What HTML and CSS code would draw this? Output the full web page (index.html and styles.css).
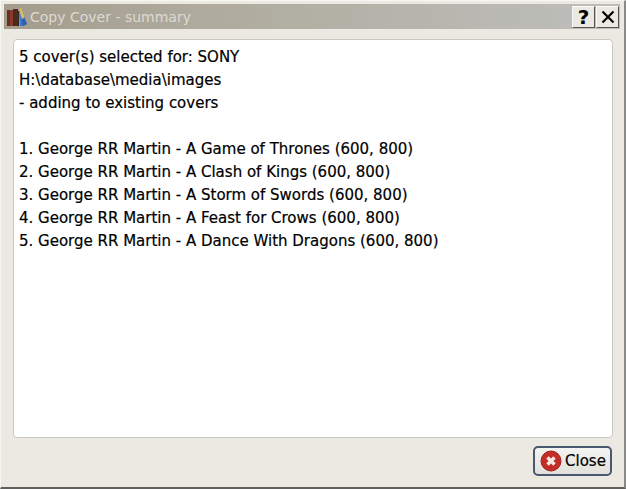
FILE: index.html
```html
<!DOCTYPE html>
<html lang="en">
<head>
    <meta charset="UTF-8">
    <title>Copy Cover - summary</title>
    <link rel="stylesheet" href="styles.css">
</head>
<body>
<div class="window">
    <div class="titlebar">
        <svg class="app-icon" width="21" height="21" viewBox="0 0 21 21">
            <rect x="0" y="4" width="3" height="16" fill="#6a2f24"/>
            <rect x="3" y="4" width="3" height="16" fill="#8a3b2c"/>
            <rect x="6" y="3" width="1" height="17" fill="#3d2a22"/>
            <rect x="7" y="3" width="4" height="17" fill="#4c2a20"/>
            <rect x="11" y="5" width="1" height="15" fill="#2c2a28"/>
            <path d="M12 3 L14 1 L20 18 L16 20 L13 20 Z" fill="#3f78c8"/>
            <path d="M12 3 L14 1 L17.5 11 L15 13 Z" fill="#dcbf5a"/>
            <path d="M14.5 14 L17.5 12.5 L20 18 L16 20 Z" fill="#2f5fb0"/>
        </svg>
        <span class="title">Copy Cover - summary</span>
        <div class="title-buttons">
            <button class="title-btn">?</button>
            <button class="title-btn">
                <svg width="14" height="14" viewBox="0 0 14 14"><path d="M1.5 1.5 L12.5 12.5 M12.5 1.5 L1.5 12.5" stroke="#000" stroke-width="2.2" fill="none"/></svg>
            </button>
        </div>
    </div>
    <div class="content">
        <div class="summary">
            <div>5 cover(s) selected for: SONY</div>
            <div>H:\database\media\images</div>
            <div>- adding to existing covers</div>
            <div>&nbsp;</div>
            <div>1. George RR Martin - A Game of Thrones (600, 800)</div>
            <div>2. George RR Martin - A Clash of Kings (600, 800)</div>
            <div>3. George RR Martin - A Storm of Swords (600, 800)</div>
            <div>4. George RR Martin - A Feast for Crows (600, 800)</div>
            <div>5. George RR Martin - A Dance With Dragons (600, 800)</div>
        </div>
        <div class="footer">
            <button class="close-btn">
                <svg width="22" height="22" viewBox="0 0 22 22">
                    <circle cx="11" cy="11" r="10" fill="#c22d28" stroke="#a32722"/>
                    <path d="M7.5 7.5 L14.5 14.5 M14.5 7.5 L7.5 14.5" stroke="#f8e8e4" stroke-width="3.4" fill="none"/>
                </svg>
                <span>Close</span>
            </button>
        </div>
    </div>
</div>
</body>
</html>
```

FILE: styles.css
```css
html, body {
    margin: 0;
    height: 100%;
}
body {
    font-family: "DejaVu Sans", sans-serif;
    background-color: #ebe9e2;
}
.window {
    box-sizing: border-box;
    height: 489px;
    display: flex;
    flex-direction: column;
    padding: 3px 4px 3px 3px;
    border-bottom: 2px solid #5f5f5b;
    border-right: 2px solid #8a8a86;
    border-left: 1px solid #f6f6f3;
    border-top: 1px solid #f6f6f3;
}
.titlebar {
    height: 25px;
    display: flex;
    align-items: center;
    background: linear-gradient(to right, #a39c8c, #aeaa9c 30%, #bcbcb8 92%);
}
.app-icon {
    margin-left: 3px;
    flex: none;
}
.title {
    margin-left: 2px;
    color: #dcdad3;
    font-size: 14px;
}
.title-buttons {
    margin-left: auto;
    display: flex;
    gap: 1px;
    padding-right: 1px;
}
.title-btn {
    width: 23px;
    height: 22px;
    padding: 0;
    display: flex;
    align-items: center;
    justify-content: center;
    background: #ebe9e2;
    border: 1px solid;
    border-color: #fafaf8 #55554f #55554f #fafaf8;
    font-family: "DejaVu Sans", sans-serif;
    font-weight: bold;
    font-size: 20px;
    color: #000;
}
.content {
    flex: 1;
    display: flex;
    flex-direction: column;
    padding: 10px 7px 8px 9px;
    min-height: 0;
}
.summary {
    flex: 1;
    background: #fff;
    border: 1px solid #c9c8c2;
    border-radius: 4px;
    padding: 6px 5px;
    font-size: 15px;
    line-height: 23px;
    color: #000;
    -webkit-text-stroke: 0.2px #000;
}
.footer {
    display: flex;
    justify-content: flex-end;
    padding-top: 8px;
    padding-right: 1px;
}
.close-btn {
    width: 79px;
    height: 30px;
    display: flex;
    align-items: center;
    gap: 3px;
    padding: 0 0 0 5px;
    background: linear-gradient(#f4f4f1, #e2e0da);
    border: 2px solid #47586f;
    border-radius: 5px;
    font-family: "DejaVu Sans", sans-serif;
    font-size: 15px;
    color: #000;
    -webkit-text-stroke: 0.2px #000;
}
```
